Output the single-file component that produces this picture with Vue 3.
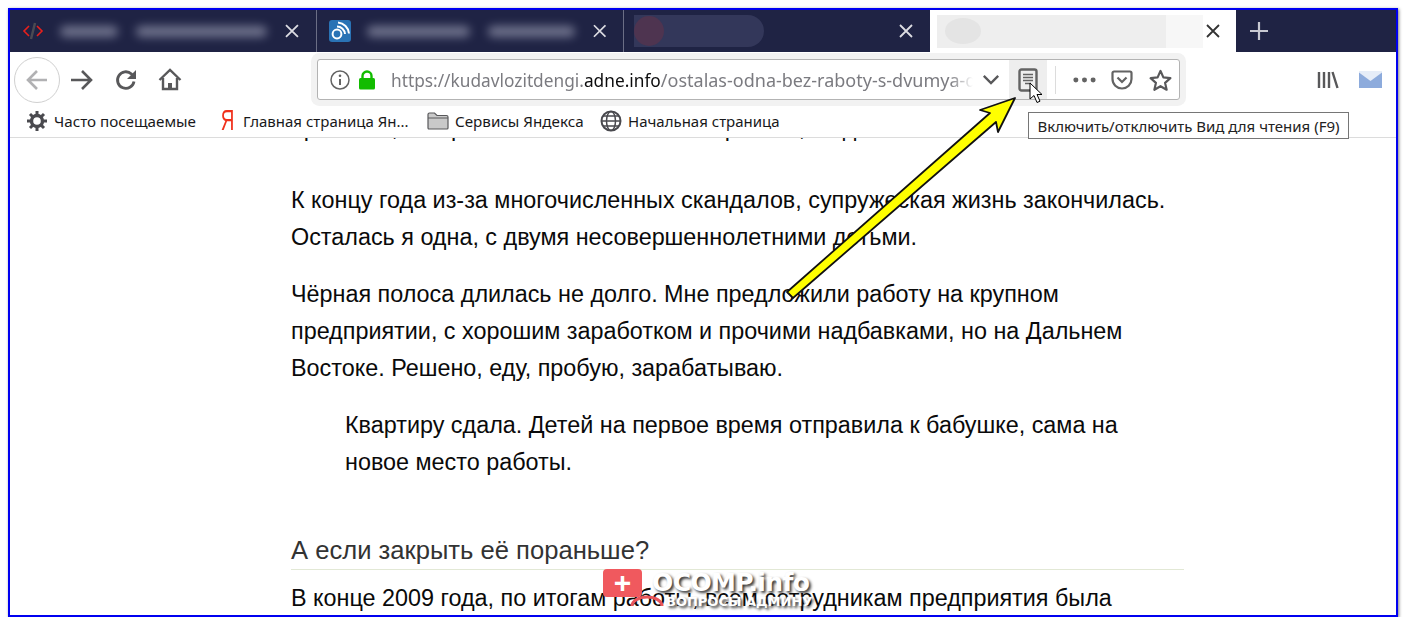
<template>
  <div class="frame">
    <!-- tab strip -->
    <div class="tabs">
      <div v-for="(tab, i) in tabs" :key="i" class="tab" :class="{ active: tab.active }">
        <svg v-if="tab.icon === 'dev'" class="favicon" viewBox="0 0 22 22">
          <path d="M7 6 2 11l5 5M15 6l5 5-5 5" fill="none" stroke="#e8201c" stroke-width="1.6" />
          <path d="M13 3 9 19" stroke="#4a4a52" stroke-width="2.4" />
        </svg>
        <svg v-if="tab.icon === 'rss'" class="favicon" viewBox="0 0 22 22">
          <rect width="22" height="22" rx="3" fill="#2a73b5" />
          <circle cx="8" cy="14" r="4.4" fill="none" stroke="#fff" stroke-width="2" />
          <path d="M8 6.500a8 8 0 0 1 8 7.500M9 2.500a12 12 0 0 1 11 11" fill="none" stroke="#fff" stroke-width="2" />
        </svg>
        <div
          v-for="(w, j) in tab.blur"
          :key="j"
          class="blur-title"
          :style="{ width: w + 'px' }"
        ></div>
        <div v-if="tab.smudge" class="smudge"><span></span></div>
        <div v-if="tab.active" class="smudge light"><span></span></div>
        <svg class="tab-close" viewBox="0 0 14 14">
          <path d="M1 1l12 12M13 1 1 13" fill="none" stroke="currentColor" stroke-width="1.8" />
        </svg>
      </div>
      <svg class="new-tab" viewBox="0 0 20 20">
        <path d="M10 1v18M1 10h18" stroke="#c8c9d2" stroke-width="2.2" />
      </svg>
    </div>

    <!-- navigation toolbar -->
    <div class="nav">
      <div class="nav-left">
        <div class="back">
          <svg viewBox="0 0 24 24" width="24" height="24">
            <path d="M22 12H3M12 3l-9 9 9 9" fill="none" stroke="#b1b1b3" stroke-width="2.6" />
          </svg>
        </div>
        <svg class="nav-ico" viewBox="0 0 24 24">
          <path d="M1 12h20M12 3l9 9-9 9" fill="none" stroke="#58585a" stroke-width="2.6" />
        </svg>
        <svg class="nav-ico" viewBox="0 0 24 24">
          <path d="M20 13.500A8.300 8.300 0 1 1 17.500 6L20 8" fill="none" stroke="#58585a" stroke-width="2.8" />
          <path d="M22 2v9h-9z" fill="#58585a" />
        </svg>
        <svg class="nav-ico" viewBox="0 0 24 24">
          <path d="M1.500 12 12 2l10.500 10M5 10v11h14V10" fill="none" stroke="#58585a" stroke-width="2.4" />
          <path d="M10 21v-6h4v6" fill="#58585a" />
        </svg>
      </div>

      <div class="urlbar">
        <svg class="info" viewBox="0 0 20 20">
          <circle cx="10" cy="10" r="9" fill="none" stroke="#636363" stroke-width="1.500" />
          <path d="M10 9v6" stroke="#636363" stroke-width="2" />
          <circle cx="10" cy="5.800" r="1.300" fill="#636363" />
        </svg>
        <svg class="lock" viewBox="0 0 18 20">
          <path d="M4.500 9V6a4.500 4.500 0 0 1 9 0v3" fill="none" stroke="#12bc00" stroke-width="2.400" />
          <rect x="1" y="8" width="16" height="11.500" rx="1.500" fill="#12bc00" />
        </svg>
        <div class="url">https://kudavlozitdengi.<b>adne.info</b><span class="url-path">/ostalas-odna-bez-raboty-s-dvumya-detmi</span></div>
        <svg class="chevron" viewBox="0 0 20 12">
          <path d="M2 2l8 8 8-8" fill="none" stroke="#58585a" stroke-width="2.600" />
        </svg>
        <div class="reader">
          <svg viewBox="0 0 20 24" width="20" height="24">
            <rect x="1.500" y="1.500" width="17" height="21" rx="2" fill="none" stroke="#636363" stroke-width="2.400" />
            <path d="M5 6.500h10M5 9.500h10M5 12.500h10M7 15.500h6" stroke="#636363" stroke-width="1.400" />
          </svg>
        </div>
        <div class="sep"></div>
        <svg class="dots" viewBox="0 0 24 6">
          <circle cx="3" cy="3" r="2.600" fill="#636363" />
          <circle cx="12" cy="3" r="2.600" fill="#636363" />
          <circle cx="21" cy="3" r="2.600" fill="#636363" />
        </svg>
        <svg class="pocket" viewBox="0 0 22 20">
          <path d="M3 1.500h16A1.500 1.500 0 0 1 20.500 3v6a9.500 9.500 0 0 1-19 0V3A1.500 1.500 0 0 1 3 1.500z" fill="none" stroke="#636363" stroke-width="2.200" />
          <path d="M6.500 7.500 11 12l4.500-4.500" fill="none" stroke="#636363" stroke-width="2.200" />
        </svg>
        <svg class="star" viewBox="0 0 24 23">
          <path d="M12 2l3 6.800 7.300.8-5.500 4.900 1.600 7.200L12 18l-6.400 3.700 1.600-7.200-5.500-4.900 7.300-.8z" fill="none" stroke="#58585a" stroke-width="2.300" stroke-linejoin="round" />
        </svg>
      </div>

      <svg class="library" viewBox="0 0 22 18">
        <path d="M2 1v16M7 1v16M12 1v16M15.500 1l5 16" stroke="#58585a" stroke-width="2.400" fill="none" />
      </svg>
      <svg class="mail" viewBox="0 0 23 17">
        <rect width="23" height="17" fill="#8dabdc" />
        <path d="M0 0h23v1.500L11.500 10 0 1.500z" fill="#e6edf8" />
      </svg>
    </div>

    <!-- bookmarks -->
    <div class="bookmarks">
      <div class="bm bm-most">
        <svg class="bm-ico" viewBox="0 0 20 20">
          <circle cx="10" cy="10" r="5.500" fill="none" stroke="#4a4a4f" stroke-width="3.400" />
          <path d="M10 0v4M10 16v4M0 10h4M16 10h4M3 3l3 3M14 14l3 3M17 3l-3 3M6 14l-3 3" stroke="#4a4a4f" stroke-width="3" />
        </svg>
        Часто посещаемые
      </div>
      <div class="bm bm-ya">
        <span class="ya">Я</span>
        Главная страница Ян...
      </div>
      <div class="bm bm-folder">
        <svg class="folder" viewBox="0 0 22 18">
          <path d="M1 16V2.500A1.500 1.500 0 0 1 2.500 1h5L10 3.500h9.500A1.500 1.500 0 0 1 21 5v11a1 1 0 0 1-1 1H2a1 1 0 0 1-1-1z" fill="#c9c9c9" stroke="#58585a" stroke-width="1.200" />
          <path d="M1 6h20" stroke="#58585a" stroke-width="1" />
        </svg>
        Сервисы Яндекса
      </div>
      <div class="bm bm-globe">
        <svg class="bm-ico globe" viewBox="0 0 22 22">
          <circle cx="11" cy="11" r="9.500" fill="#fff" stroke="#4a4a4f" stroke-width="2" />
          <ellipse cx="11" cy="11" rx="4.500" ry="9.500" fill="none" stroke="#4a4a4f" stroke-width="1.500" />
          <path d="M1.500 11h19M3 6h16M3 16h16" stroke="#4a4a4f" stroke-width="1.500" />
        </svg>
        Начальная страница
      </div>
    </div>

    <!-- page content -->
    <div class="page">
      <article class="article">
        <p class="clipped">приятная, которая оказалась не такой простой, когда</p>
        <p class="first">К концу года из-за многочисленных скандалов, супружеская жизнь закончилась. Осталась я одна, с двумя несовершеннолетними детьми.</p>
        <p>Чёрная полоса длилась не долго. Мне предложили работу на крупном предприятии, с хорошим заработком и прочими надбавками, но на Дальнем Востоке. Решено, еду, пробую, зарабатываю.</p>
        <blockquote>Квартиру сдала. Детей на первое время отправила к бабушке, сама на новое место работы.</blockquote>
        <h2>А если закрыть её пораньше?</h2>
        <p>В конце 2009 года, по итогам работы, всем сотрудникам предприятия была</p>
      </article>
    </div>

    <div class="tooltip">Включить/отключить Вид для чтения (F9)</div>

    <!-- yellow arrow over the screenshot -->
    <svg class="arrow" viewBox="0 0 1390 609" width="1390" height="609">
      <path d="M777 282 L980 103 L970 100 L1005 88 L988 122 L986 112 L783 288 Z" fill="#ffff00" stroke="#111" stroke-width="1.800" stroke-linejoin="round" />
    </svg>

    <svg class="cursor" viewBox="0 0 14 22" width="14" height="22">
      <path d="M1 1v16l4-3.500 3 7 3-1.300-3-6.700h5z" fill="#fff" stroke="#000" stroke-width="1" />
    </svg>

    <div class="watermark">
      <div class="wm-badge"><span>+</span></div>
      <svg class="wm-arc" viewBox="0 0 36 14" width="36" height="14">
        <path d="M3 12A15 9 0 0 1 33 12" fill="none" stroke="#e8555a" stroke-width="3" />
      </svg>
      <div class="wm-text">
        <div class="wm-name">OCOMP.info</div>
        <div class="wm-sub">ВОПРОСЫ АДМИНУ</div>
      </div>
    </div>
  </div>
</template>

<script setup>
const tabs = [
  { icon: 'dev', blur: [58, 132] },
  { icon: 'rss', blur: [108, 90] },
  { smudge: true },
  { active: true }
]
</script>

<style>
html, body {
  margin: 0;
  background: #fff;
}
</style>

<style scoped>
.frame {
  position: relative;
  box-sizing: border-box;
  width: 1390px;
  height: 609px;
  margin: 8px 0 0 8px;
  border: 2px solid #0000f0;
  box-shadow: 1px 1px 3px rgba(0, 0, 0, 0.5);
  background: #fff;
  overflow: hidden;
  font-family: "Noto Sans", "Open Sans", sans-serif;
}

.tabs {
  display: flex;
  align-items: center;
  height: 42px;
  background: #1f2344;
}

.tab {
  position: relative;
  display: flex;
  align-items: center;
  box-sizing: border-box;
  width: 307px;
  height: 42px;
  padding: 0 17px 0 12px;
  border-right: 1px solid #6b6e85;
  color: #dcdce2;
}

.tab:nth-child(3) {
  width: 306px;
  border-right: none;
}

.tab.active {
  width: 306px;
  padding-right: 16px;
  background: #fff;
  border-right: none;
  color: #333;
}

.favicon {
  width: 22px;
  height: 22px;
  flex-shrink: 0;
  margin-right: 16px;
}

.blur-title {
  height: 11px;
  margin-right: 18px;
  border-radius: 6px;
  background: #8c8fa6;
  filter: blur(5px);
  opacity: 0.75;
}

.smudge {
  display: flex;
  align-items: center;
  width: 130px;
  height: 32px;
  margin-left: -2px;
  border-radius: 0 16px 16px 0;
  background: #33375a;
}

.smudge span {
  display: block;
  width: 30px;
  height: 30px;
  border-radius: 50%;
  background: #4e3450;
}

.smudge.light {
  width: 266px;
  height: 33px;
  margin-left: -5px;
  border-radius: 0;
  background: linear-gradient(to right, #eeeeee 86%, #f7f7f7 86%);
}

.smudge.light span {
  width: 36px;
  height: 26px;
  margin-left: 8px;
  background: #e4e4e4;
}

.tab-close {
  width: 14px;
  height: 14px;
  margin-left: auto;
}

.new-tab {
  width: 20px;
  height: 20px;
  margin-left: 13px;
}

.nav {
  display: flex;
  align-items: center;
  height: 55px;
  padding-left: 4px;
}

.nav-left {
  display: flex;
  align-items: center;
  width: 303px;
}

.back {
  display: flex;
  align-items: center;
  justify-content: center;
  box-sizing: border-box;
  width: 46px;
  height: 46px;
  margin-right: 10px;
  border: 1px solid #d0d0d0;
  border-radius: 50%;
}

.nav-ico {
  width: 24px;
  height: 24px;
  margin-right: 20px;
}

.urlbar {
  display: flex;
  align-items: center;
  box-sizing: border-box;
  width: 863px;
  height: 41px;
  border: 1px solid #b3b3b3;
  border-radius: 3px;
  box-shadow: 0 0 0 6px #f2f2f2;
  background: #fff;
}

.info {
  width: 20px;
  height: 20px;
  margin-left: 12px;
  flex-shrink: 0;
}

.lock {
  width: 18px;
  height: 20px;
  margin-left: 8px;
  flex-shrink: 0;
}

.url {
  width: 582px;
  margin-left: 15px;
  overflow: hidden;
  white-space: nowrap;
  font-size: 17.3px;
  color: #7b7b80;
  -webkit-mask-image: linear-gradient(to right, #000 96%, transparent);
  mask-image: linear-gradient(to right, #000 96%, transparent);
}

.url b {
  font-weight: 400;
  color: #0c0c0d;
}

.url-path {
  font-size: 18px;
}

.chevron {
  width: 18px;
  height: 11px;
  margin-left: 9px;
  flex-shrink: 0;
}

.reader {
  display: flex;
  align-items: center;
  justify-content: center;
  width: 38px;
  height: 39px;
  margin-left: 9px;
  background: #eeeeee;
  flex-shrink: 0;
}

.sep {
  width: 1px;
  height: 28px;
  margin-left: 8px;
  background: #dcdcdc;
}

.dots {
  width: 23px;
  height: 6px;
  margin-left: 17px;
}

.pocket {
  width: 22px;
  height: 20px;
  margin-left: 15px;
}

.star {
  width: 23px;
  height: 22px;
  margin-left: 16px;
}

.library {
  width: 22px;
  height: 18px;
  margin-left: 137px;
}

.mail {
  width: 23px;
  height: 17px;
  margin-left: 20px;
}

.bookmarks {
  display: flex;
  align-items: center;
  box-sizing: border-box;
  height: 31px;
  padding: 0 0 3px 17px;
  border-bottom: 1px solid #dcdcdc;
  font-size: 15.2px;
  color: #18181a;
}

.bm {
  display: flex;
  align-items: center;
  white-space: nowrap;
}

.bm-ico {
  width: 20px;
  height: 20px;
  margin-right: 7px;
}

.globe {
  width: 22px;
  height: 22px;
  margin-right: 6px;
}

.bm-most {
  width: 187px;
}

.bm-ya {
  width: 213px;
  font-size: 15px;
}

.ya {
  width: 27px;
  margin-right: 2px;
  font-family: "Liberation Sans", sans-serif;
  font-size: 29px;
  line-height: 25px;
  text-align: center;
  color: #f0311c;
  transform: scaleX(0.65);
}

.bm-folder {
  width: 173px;
}

.bm-globe {
  font-size: 15px;
}

.folder {
  width: 22px;
  height: 18px;
  margin-right: 6px;
}

.page {
  height: 478px;
  overflow: hidden;
}

.article {
  width: 893px;
  margin-left: 281px;
  font-family: "Liberation Sans", Arial, sans-serif;
  font-size: 23.37px;
  line-height: 37px;
  color: #0a0a0a;
}

.article p,
.article blockquote {
  margin: 0 0 20px;
}

.article .clipped {
  margin: -28px 0 0;
  white-space: nowrap;
}

.article .first {
  margin-top: 35px;
}

.article blockquote {
  margin-left: 54px;
  margin-right: 50px;
}

.article h2 {
  margin: 52px 0 10px;
  padding-bottom: 2px;
  border-bottom: 1px solid #e2e8d5;
  font-size: 25.6px;
  font-weight: 400;
  line-height: 34px;
  color: #333;
}

.tooltip {
  position: absolute;
  left: 1018px;
  top: 102px;
  box-sizing: border-box;
  width: 321px;
  height: 27px;
  border: 1px solid #767676;
  background: #fff;
  font-size: 15px;
  line-height: 27px;
  text-align: center;
  white-space: nowrap;
  color: #222;
}

.arrow {
  position: absolute;
  left: 0;
  top: 0;
  pointer-events: none;
}

.cursor {
  position: absolute;
  left: 1019px;
  top: 72px;
}

.watermark {
  position: absolute;
  left: 593px;
  top: 559px;
  display: flex;
  gap: 10px;
}

.wm-badge {
  display: flex;
  align-items: center;
  justify-content: center;
  width: 39px;
  height: 28px;
  border-radius: 4px;
  background: #f0595e;
  color: #fff;
  font-family: "Liberation Sans", sans-serif;
  font-size: 30px;
  font-weight: 700;
  line-height: 28px;
}

.wm-arc {
  position: absolute;
  left: 26px;
  top: 25px;
}

.wm-text {
  font-family: "DejaVu Sans", sans-serif;
  font-weight: 700;
  color: #fff;
  white-space: nowrap;
  text-shadow: 2px 2px 3px rgba(0, 0, 0, 0.8), 0 0 2px rgba(255, 255, 255, 0.9);
}

.wm-name {
  font-size: 25px;
  line-height: 27px;
  letter-spacing: -0.6px;
}

.wm-sub {
  margin-left: 14px;
  font-size: 13px;
  line-height: 12px;
}
</style>
